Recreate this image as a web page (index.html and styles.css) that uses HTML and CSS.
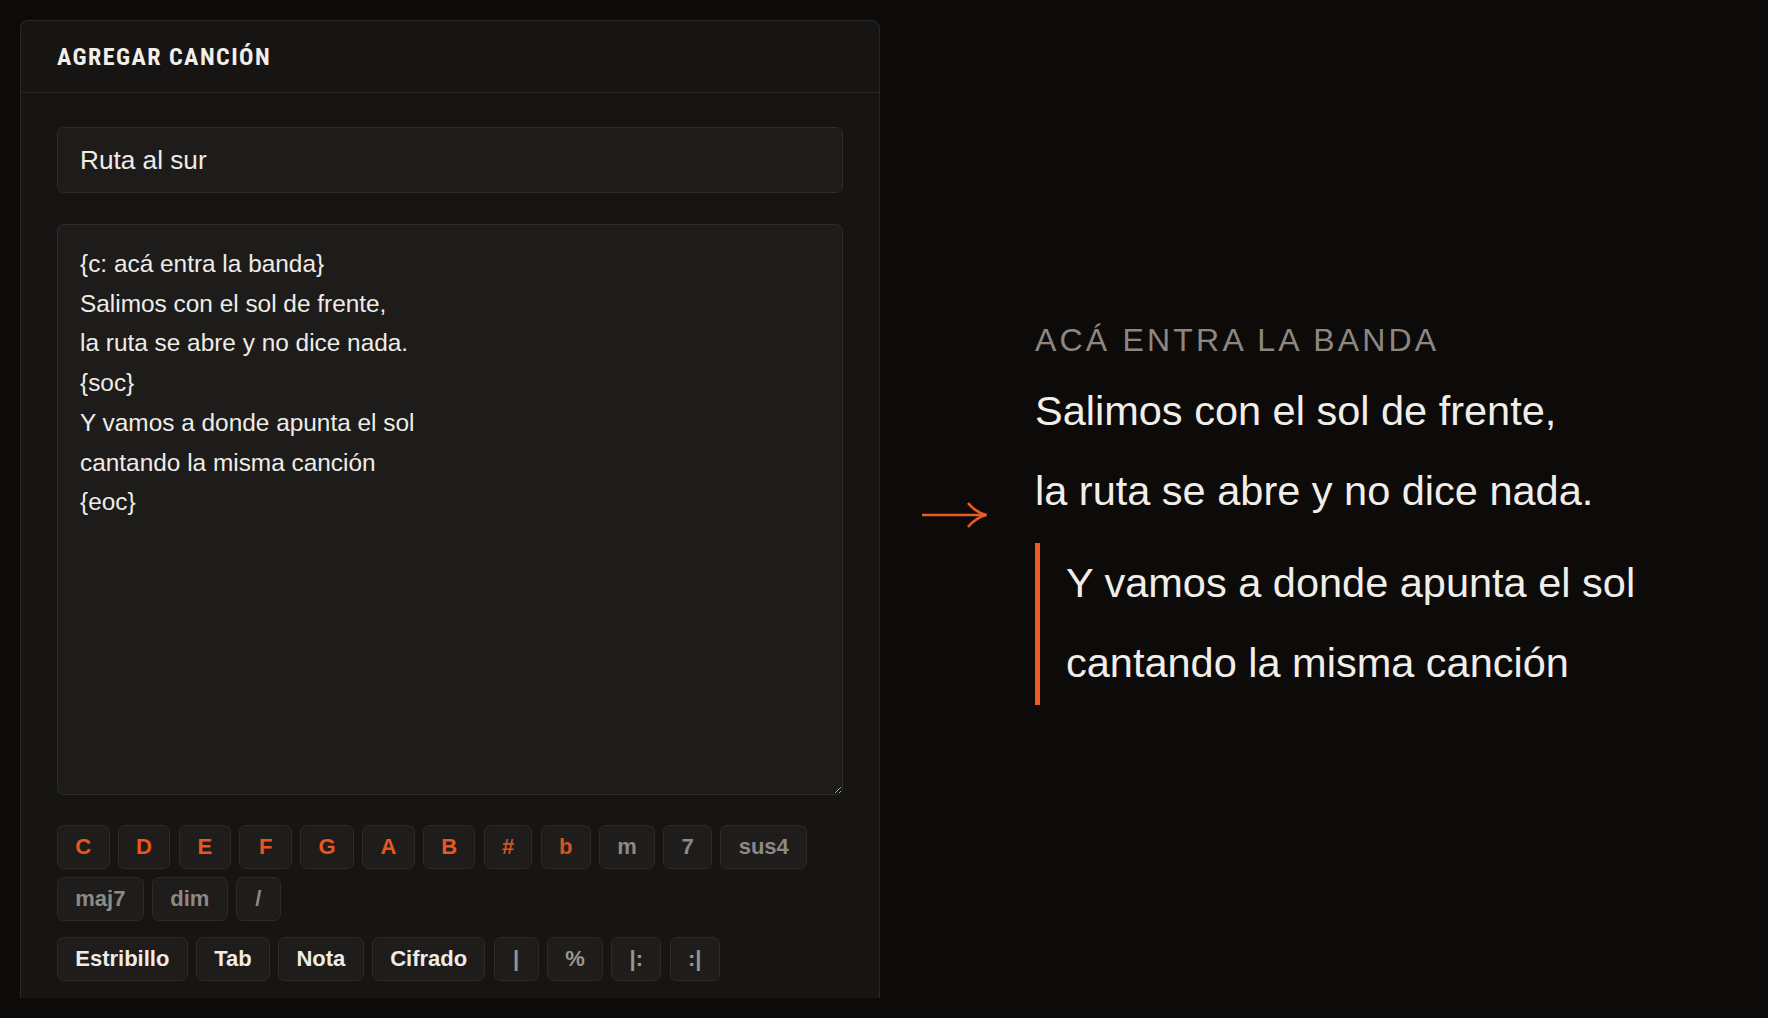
FILE: index.html
```html
<!DOCTYPE html>
<html lang="es">
<head>
<meta charset="utf-8">
<title>Agregar canción</title>
<link rel="stylesheet" href="styles.css">
</head>
<body>
<section class="panel">
  <header class="panel-head">
    <h2 class="panel-title">AGREGAR CANCIÓN</h2>
  </header>
  <div class="panel-body">
    <input class="field" type="text" value="Ruta al sur">
    <textarea class="field editor" spellcheck="false">{c: acá entra la banda}
Salimos con el sol de frente,
la ruta se abre y no dice nada.
{soc}
Y vamos a donde apunta el sol
cantando la misma canción
{eoc}</textarea>
    <div class="keys">
      <button class="key note">C</button>
      <button class="key note">D</button>
      <button class="key note">E</button>
      <button class="key note">F</button>
      <button class="key note">G</button>
      <button class="key note">A</button>
      <button class="key note">B</button>
      <button class="key acc">#</button>
      <button class="key acc">b</button>
      <button class="key mod">m</button>
      <button class="key mod">7</button>
      <button class="key mod">sus4</button>
      <button class="key mod">maj7</button>
      <button class="key mod">dim</button>
      <button class="key mod">/</button>
    </div>
    <div class="keys tools">
      <button class="key tool">Estribillo</button>
      <button class="key tool">Tab</button>
      <button class="key tool">Nota</button>
      <button class="key tool">Cifrado</button>
      <button class="key sym">|</button>
      <button class="key sym">%</button>
      <button class="key sym">|:</button>
      <button class="key sym">:|</button>
    </div>
  </div>
</section>
<main class="stage">
  <svg class="arrow" width="66" height="28" viewBox="0 0 66 28" aria-hidden="true">
    <path d="M0 14 H63" fill="none" stroke="#f05a22" stroke-width="2.6"/>
    <path d="M46 2 C51 8 56 12 64.5 14 C56 16 51 20 46 26" fill="none" stroke="#f05a22" stroke-width="2.6"/>
  </svg>
  <article class="preview">
    <p class="section-label">ACÁ ENTRA LA BANDA</p>
    <div class="verse">
      <p class="lyric">Salimos con el sol de frente,</p>
      <p class="lyric">la ruta se abre y no dice nada.</p>
    </div>
    <div class="verse chorus">
      <p class="lyric">Y vamos a donde apunta el sol</p>
      <p class="lyric">cantando la misma canción</p>
    </div>
  </article>
</main>
</body>
</html>
```

FILE: styles.css
```css
* {
  box-sizing: border-box;
}

html,
body {
  margin: 0;
  height: 100%;
}

body {
  background: #0c0b0a;
  padding: 20px;
  display: flex;
  align-items: flex-start;
  font-family: "Liberation Sans", Arial, sans-serif;
  color: #efece7;
  overflow: hidden;
}

.panel {
  flex: none;
  width: 860px;
  height: 978px;
  background: #161514;
  border: 1px solid #2a2826;
  border-bottom: 0;
  border-radius: 8px 8px 0 0;
  overflow: hidden;
}

.panel-head {
  height: 72px;
  border-bottom: 1px solid #2a2826;
  padding: 0 36px;
  display: flex;
  align-items: center;
}

.panel-title {
  margin: 0;
  font-family: "Liberation Sans Narrow", "Roboto Condensed", Roboto, sans-serif;
  font-weight: 700;
  font-size: 24px;
  line-height: 1;
  letter-spacing: 1.45px;
  color: #f2efea;
}

.panel-body {
  padding: 34px 36px 0;
}

.field {
  display: block;
  width: 100%;
  height: 66px;
  margin: 0;
  padding: 0 22px;
  background: #1d1c1b;
  border: 1px solid #2e2c2a;
  border-radius: 7px;
  color: #efece7;
  font-family: "Liberation Sans", Arial, sans-serif;
  font-size: 26.2px;
  outline: none;
}

.editor {
  height: 571px;
  margin-top: 31px;
  padding: 19px 22px;
  font-size: 24.4px;
  line-height: 39.7px;
  resize: vertical;
  color-scheme: dark;
}

.keys {
  display: flex;
  flex-wrap: wrap;
  gap: 8.3px;
  margin-top: 30px;
}

.keys.tools {
  margin-top: 16px;
}

.key {
  height: 44px;
  min-width: 45px;
  margin: 0;
  padding: 0 17.25px;
  display: inline-flex;
  align-items: center;
  justify-content: center;
  background: #1e1d1c;
  border: 1px solid #2d2b29;
  border-radius: 7px;
  font-family: "Liberation Sans", Arial, sans-serif;
  font-weight: 700;
  font-size: 22px;
  line-height: 1;
}

.note {
  min-width: 52.5px;
  color: #ea561f;
}

.acc {
  color: #d4531f;
}

.mod {
  color: #8e8984;
}

.tool {
  color: #efece7;
}

.sym {
  color: #9a958f;
}

.stage {
  flex: 1;
  height: 978px;
  display: flex;
  align-items: center;
}

.arrow {
  flex: none;
  display: block;
  margin-left: 42px;
  margin-top: 12px;
}

.preview {
  margin-left: 47px;
  padding-top: 7px;
}

.section-label {
  margin: 0 0 11px;
  font-size: 32px;
  line-height: 40px;
  letter-spacing: 3.2px;
  color: #8d8781;
}

.lyric {
  margin: 0;
  font-size: 41.5px;
  line-height: 80px;
  color: #f1eee9;
  white-space: nowrap;
}

.chorus {
  margin-top: 12px;
  padding-left: 26px;
  padding-bottom: 2px;
  border-left: 5px solid #f05a22;
}
```
